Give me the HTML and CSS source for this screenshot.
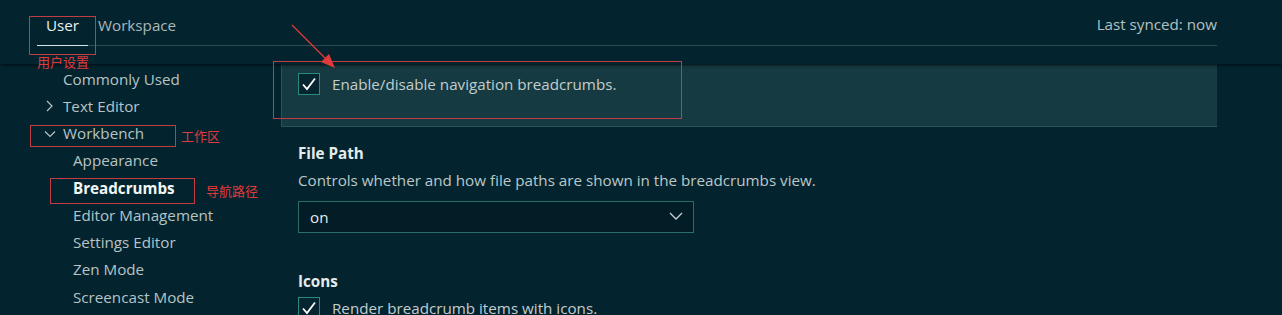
FILE: index.html
```html
<!DOCTYPE html>
<html lang="en">
<head>
<meta charset="utf-8">
<title>Settings</title>
<link rel="stylesheet" href="styles.css">
</head>
<body>
<div class="page">
  <header class="header">
    <div class="tabs">
      <div class="tab active">User</div>
      <div class="tab">Workspace</div>
      <div class="spacer"></div>
      <div class="synced">Last synced: now</div>
    </div>
  </header>
  <div class="main">
    <nav class="sidebar">
      <div class="row l1">Commonly Used</div>
      <div class="row l0"><svg class="chev" width="14" height="14" viewBox="0 0 14 14"><polyline points="4,2 9,7 4,12" fill="none" stroke="#b7c3c5" stroke-width="1.2"/></svg>Text Editor</div>
      <div class="row l0"><svg class="chev" width="14" height="14" viewBox="0 0 14 14"><polyline points="2,4.5 7,9.5 12,4.5" fill="none" stroke="#b7c3c5" stroke-width="1.2"/></svg>Workbench</div>
      <div class="row l2">Appearance</div>
      <div class="row l2 active">Breadcrumbs</div>
      <div class="row l2">Editor Management</div>
      <div class="row l2">Settings Editor</div>
      <div class="row l2">Zen Mode</div>
      <div class="row l2">Screencast Mode</div>
    </nav>
    <section class="content">
      <div class="setting focused">
        <div class="check-row">
          <span class="checkbox"><svg width="20" height="20" viewBox="0 0 20 20"><polyline points="4,10.5 8,15 16,4.5" fill="none" stroke="#ffffff" stroke-width="1.8"/></svg></span>
          <span class="check-label">Enable/disable navigation breadcrumbs.</span>
        </div>
      </div>
      <div class="setting">
        <div class="title">File Path</div>
        <div class="desc">Controls whether and how file paths are shown in the breadcrumbs view.</div>
        <div class="select">
          <span>on</span>
          <svg width="16" height="16" viewBox="0 0 16 16"><polyline points="2,5 8,11 14,5" fill="none" stroke="#c8d2d4" stroke-width="1.3"/></svg>
        </div>
      </div>
      <div class="setting second">
        <div class="title">Icons</div>
        <div class="check-row">
          <span class="checkbox"><svg width="20" height="20" viewBox="0 0 20 20"><polyline points="4,10.5 8,15 16,4.5" fill="none" stroke="#ffffff" stroke-width="1.8"/></svg></span>
          <span class="check-label">Render breadcrumb items with icons.</span>
        </div>
      </div>
    </section>
  </div>

  <div class="note box-user"></div>
  <div class="note-text t-user">用户设置</div>
  <div class="note box-workbench"></div>
  <div class="note-text t-workbench">工作区</div>
  <div class="note box-bread"></div>
  <div class="note-text t-bread">导航路径</div>
  <div class="note box-check"></div>
  <svg class="arrow" width="60" height="60" viewBox="0 0 60 60">
    <line x1="2" y1="2" x2="38" y2="38" stroke="#e03a3a" stroke-width="1.3"/>
    <polygon points="45,45 31,39 39,31" fill="#e03a3a"/>
  </svg>
</div>
</body>
</html>
```

FILE: styles.css
```css
* { box-sizing: border-box; }
html, body {
  margin: 0;
  padding: 0;
  background: #03242e;
  font-family: "Open Sans", "Noto Sans", sans-serif;
  font-size: 15.2px;
  color: #b7c3c5;
}
.page {
  position: relative;
  width: 1282px;
  height: 315px;
  overflow: hidden;
}
.header {
  height: 64px;
  position: relative;
  z-index: 2;
  background: #03242e;
  box-shadow: 0 1px 3px rgba(0, 10, 14, 0.9);
}
.tabs {
  display: flex;
  align-items: flex-end;
  margin-left: 37px;
  width: 1180px;
  height: 46px;
  border-bottom: 1px solid #2e4b51;
}
.tab {
  height: 46px;
  padding-top: 14px;
  line-height: 22px;
  color: #a9b7ba;
  margin-bottom: -1px;
}
.tab.active {
  width: 51px;
  text-align: center;
  color: #e9f0f0;
  border-bottom: 1px solid #d6e6e6;
  margin-right: 10px;
}
.spacer { flex: 1; }
.synced {
  height: 46px;
  padding-top: 14px;
  line-height: 22px;
  color: #b4c0c2;
}
.main {
  display: flex;
}
.sidebar {
  width: 281px;
  padding-top: 1.5px;
}
.row {
  height: 27.25px;
  line-height: 27.25px;
  display: flex;
  align-items: center;
  white-space: nowrap;
}
.row.l1 { padding-left: 63px; }
.row.l0 { padding-left: 43px; }
.row.l2 { padding-left: 73px; }
.row .chev { margin-right: 6px; }
.row.active { color: #f2f6f6; font-weight: 700; }
.content {
  width: 936px;
}
.setting {
  padding-left: 17px;
}
.setting.focused {
  height: 63px;
  padding-top: 9px;
  background: #153a41;
  border-left: 1px solid #2c5257;
  border-bottom: 1px solid #2c5257;
  padding-left: 16px;
}
.check-row {
  display: flex;
  align-items: center;
}
.checkbox {
  width: 22px;
  height: 22px;
  border: 1px solid #2a8a80;
  background: #052530;
  display: flex;
  align-items: center;
  justify-content: center;
  margin-right: 12px;
}
.check-label {
  line-height: 22px;
  color: #c3cdcf;
}
.title {
  margin-top: 15px;
  line-height: 22px;
  font-weight: 700;
  color: #e6ebeb;
}
.desc {
  margin-top: 5px;
  line-height: 22px;
  color: #bcc7c9;
}
.select {
  margin-top: 10px;
  width: 396px;
  height: 32px;
  border: 1px solid #2b6b69;
  background: #021d25;
  display: flex;
  align-items: center;
  justify-content: space-between;
  padding: 0 9px 0 11px;
  color: #e3eaea;
}
.select svg { margin-top: -2px; }
.setting.second .title { margin-top: 37px; }
.setting.second .check-row { margin-top: 5px; }

/* annotations */
.note {
  position: absolute;
  border: 1px solid #c23c44;
  z-index: 3;
}
.box-user { left: 29px; top: 16px; width: 67px; height: 39px; }
.box-workbench { left: 30px; top: 125px; width: 146px; height: 22px; }
.box-bread { left: 50px; top: 178px; width: 145px; height: 26px; }
.box-check { left: 273px; top: 61px; width: 409px; height: 58px; }
.note-text {
  position: absolute;
  z-index: 3;
  font-family: "Noto Sans CJK SC", sans-serif;
  font-size: 13px;
  line-height: 16px;
  color: #e0393c;
}
.t-user { left: 37px; top: 54px; }
.t-workbench { left: 181px; top: 128px; }
.t-bread { left: 206px; top: 183px; }
.arrow {
  position: absolute;
  left: 290px;
  top: 23px;
  z-index: 3;
}
```
